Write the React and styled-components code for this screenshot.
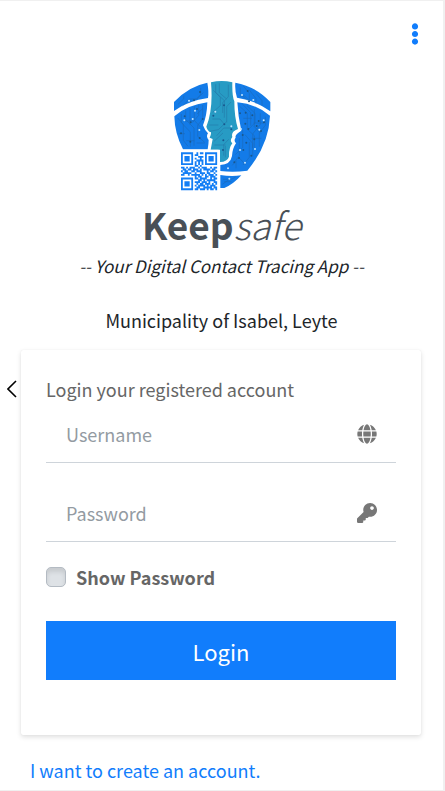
import React, { useState } from "react";
import styled, { createGlobalStyle } from "styled-components";
import { FaGlobe, FaKey, FaEllipsisV } from "react-icons/fa";

const GlobalStyle = createGlobalStyle`
  *, *::before, *::after { box-sizing: border-box; }
  body {
    margin: 0;
    background: #fff;
    color: #212529;
    font-family: "Noto Sans CJK SC", "Noto Sans", sans-serif;
    font-size: 18px;
    line-height: 28px;
  }
`;

const Page = styled.div`
  min-height: 100vh;
  display: flex;
  flex-direction: column;
  border: solid #f0f0f0;
  border-width: 1px 2px 1px 0;
`;

const TopBar = styled.header`
  display: flex;
  justify-content: flex-end;
  padding: 22px 17px 0 0;
`;

const MenuButton = styled.button`
  display: flex;
  padding: 0;
  border: 0;
  background: none;
  color: #117dfc;
  font-size: 22px;
  cursor: pointer;
`;

const Brand = styled.section`
  display: flex;
  flex-direction: column;
  align-items: center;
  padding-top: 35px;
  text-align: center;
`;

const Logo = styled.svg`
  display: block;
  width: 106px;
  height: 112px;
`;

const Title = styled.h1`
  margin: 4px 0 0;
  color: #495057;
  font-size: 37px;
  line-height: 56px;
  font-weight: 700;

  em { font-weight: 300; }
`;

const Tagline = styled.p`
  margin: 0;
  font-size: 17px;
  font-style: italic;
`;

const Place = styled.p`
  margin: 26px 0 0;
`;

const LoginRow = styled.main`
  display: flex;
  align-items: flex-start;
  padding: 16px 22px 0 0;
`;

const BackButton = styled.button`
  flex: 0 0 21px;
  display: flex;
  justify-content: flex-end;
  margin-top: 30px;
  padding: 0 4px 0 0;
  border: 0;
  background: none;
  color: #000;
  cursor: pointer;
`;

const Card = styled.form`
  flex: 1;
  min-width: 0;
  padding: 25px 25px 55px;
  background: #fff;
  color: #666;
  border-radius: 2px;
  box-shadow: 0 0 1px rgba(0, 0, 0, 0.1), 0 2px 5px rgba(0, 0, 0, 0.13);
`;

const CardHeading = styled.p`
  margin: 0;
`;

const Field = styled.label`
  display: flex;
  align-items: center;
  height: ${(p) => (p.$first ? "60px" : "79px")};
  padding: ${(p) => (p.$first ? "3px" : "22px")} 19px 0 20px;
  border-bottom: 1px solid #ced4da;
  color: #777;
  font-size: 20px;
`;

const TextInput = styled.input`
  flex: 1;
  min-width: 0;
  padding: 0;
  border: 0;
  outline: 0;
  background: transparent;
  color: #495057;
  font: inherit;
  font-size: 18px;
  line-height: 28px;

  &::placeholder { color: #939ba2; opacity: 1; }
`;

const CheckLabel = styled.label`
  display: flex;
  align-items: center;
  gap: 10px;
  margin-top: 21px;
  font-weight: 700;
`;

const Checkbox = styled.input`
  appearance: none;
  width: 20px;
  height: 20px;
  margin: 0;
  border: 1px solid #b4bbc3;
  border-radius: 5px;
  background: #dee2e6;
  box-shadow: inset 0 4px 4px rgba(0, 0, 0, 0.1);

  &:checked { background: #117dfc; }
`;

const LoginButton = styled.button`
  display: block;
  width: 100%;
  height: 59px;
  margin-top: 30px;
  padding: 0;
  border: 0;
  background: #117dfc;
  color: #fff;
  font: inherit;
  font-size: 22px;
  cursor: pointer;
`;

const CreateLink = styled.a`
  align-self: flex-start;
  margin: 21px 0 0 30px;
  color: #117dfc;
  text-decoration: none;
`;

const QR_ROWS = [
  "111111100101101111111",
  "100000101100001000001",
  "101110100011101011101",
  "101110101001001011101",
  "101110100111101011101",
  "100000101010101000001",
  "111111101010101111111",
  "000000001101000000000",
  "110101110010111001011",
  "011011011101011110110",
  "101100110111000101101",
  "011111001001110110010",
  "110010111110101011101",
  "000000001011001101110",
  "111111101101111001011",
  "100000100011010111110",
  "101110101110111010011",
  "101110100101101110101",
  "101110101011110101110",
  "100000100110011111011",
  "111111101101110101101",
];

const QR_PATH = QR_ROWS.map((row, y) =>
  [...row].map((v, x) => (v === "1" ? `M${x} ${y}h1.05v1.05h-1.05z` : "")).join("")
).join("");

function KeepsafeLogo() {
  return (
    <Logo viewBox="18 30 318 336" role="img" aria-label="Keepsafe">
      <g fill="#137be8">
        <path d="M33 123V96Q76 49 133 38Q138 65 135 84Q76 91 33 123Z" />
        <path d="M217 38Q278 49 322 96V124Q277 91 222 83Q215 62 217 38Z" />
        <path d="M34 139Q72 105 133 97Q132 136 120 166Q125 181 135 190Q128 199 137 210Q137 220 134 238H60Q35 190 34 139Z" />
        <path d="M223 97Q278 101 321 137Q318 224 253 302Q212 308 172 303V285Q202 284 207 258Q208 236 219 220Q211 211 218 203Q214 194 235 182Q225 139 223 97Z" />
        <path d="M172 315Q205 321 235 316Q211 343 184 354H172Z" />
      </g>
      <path
        fill="#279bc4"
        d="M144 37Q176 29 208 37Q207 79 214 94Q214 143 225 177Q203 185 208 201Q199 212 208 220Q197 234 198 260Q193 275 171 276V239H143L149 207L140 203Q145 193 144 187Q134 184 130 170Q151 119 144 37Z"
      />
      <g fill="none" stroke="#225d93" strokeWidth="1.6" opacity=".6">
        <path d="M45 103l17-16v-10M58 109l21-22h22l12-14V54M77 99l22-12M100 88l21-20M232 53v19l22 20M241 48l18 22v25M258 59l21 27v16M280 71l17 21v15M230 78h15l14 14" />
        <path d="M44 144l17 19v48l14 18M55 132v26l27 28v44M68 122v27l25 25v53M81 116v48M94 108v43l18 20M107 104v32l-18 21M119 105v42l-15 19v33l21 18M47 191h19M70 212h24M101 219h24M64 153h29M102 132l18-17" />
        <path d="M151 61l21 21v25l-23 20M158 43v24l26 25v51M169 40v28l22 19M196 44v36l-17 18v31M204 96l-13 14v47M148 147h23l14 17M139 165h27M140 184l26-5 25-24M161 197l21-23h22M153 214l27-25M182 257v-33l15-16M187 262v-34M154 225h34" />
        <path d="M230 109l23 21v48l21 19v36M239 103l24 25v39M252 107l24 23v28l-20 21M274 117v53l19 20M292 130v33l-23 29v42M307 140v26l-18 23v41M239 180v52l-22 22M229 205v52l-21 29M246 194l23 26v39M259 216v46l-19 23M230 265l18 20M219 273v22M241 145h26M266 205h29M272 159h31" />
        <path d="M180 328h25l13-7M178 343l25-18M184 335h21" />
      </g>
      <g fill="#19578d">
        {[[93,91],[111,66],[254,63],[258,94],[102,117],[119,147],[83,157],[65,139],[54,190],[82,215],[110,204],[183,106],[151,137],[184,163],[205,178],[181,211],[180,240],[231,130],[248,128],[268,136],[247,161],[281,168],[294,183],[256,177],[239,195],[250,218],[241,240],[274,208],[287,153],[303,157],[265,257],[228,264],[214,277]].map(([x, y]) => (
          <circle key={`${x}-${y}`} cx={x} cy={y} r="3" />
        ))}
      </g>
      <g fill="#bfe4ff">
        {[[78,92],[237,75],[271,90],[96,122],[64,151],[109,180],[89,147],[157,125],[205,169],[302,151],[289,179],[234,177],[231,240],[276,237],[195,295],[246,278],[199,326]].map(([x, y]) => (
          <circle key={`${x}-${y}`} cx={x} cy={y} r="3" />
        ))}
      </g>
      <path fill="#fff" d="M49 239h118v125H49z" />
      <path fill="#137ef5" transform="translate(54 247) scale(5.15 5.4)" d={QR_PATH} />
    </Logo>
  );
}

function ChevronLeft() {
  return (
    <svg width="10" height="18" viewBox="0 0 10 18" fill="none" stroke="currentColor" strokeWidth="1.6" aria-hidden="true">
      <path d="M9 1L1 9l8 8" />
    </svg>
  );
}

export default function App() {
  const [visible, setVisible] = useState(false);

  return (
    <>
      <GlobalStyle />
      <Page>
        <TopBar>
          <MenuButton type="button" aria-label="Menu">
            <FaEllipsisV />
          </MenuButton>
        </TopBar>
        <Brand>
          <KeepsafeLogo />
          <Title>Keep<em>safe</em></Title>
          <Tagline>-- Your Digital Contact Tracing App --</Tagline>
          <Place>Municipality of Isabel, Leyte</Place>
        </Brand>
        <LoginRow>
          <BackButton type="button" aria-label="Back">
            <ChevronLeft />
          </BackButton>
          <Card onSubmit={(e) => e.preventDefault()}>
            <CardHeading>Login your registered account</CardHeading>
            <Field $first>
              <TextInput type="text" placeholder="Username" aria-label="Username" />
              <FaGlobe aria-hidden="true" />
            </Field>
            <Field>
              <TextInput type={visible ? "text" : "password"} placeholder="Password" aria-label="Password" />
              <FaKey aria-hidden="true" />
            </Field>
            <CheckLabel>
              <Checkbox type="checkbox" checked={visible} onChange={(e) => setVisible(e.target.checked)} />
              Show Password
            </CheckLabel>
            <LoginButton type="submit">Login</LoginButton>
          </Card>
        </LoginRow>
        <CreateLink href="#register">I want to create an account.</CreateLink>
      </Page>
    </>
  );
}
